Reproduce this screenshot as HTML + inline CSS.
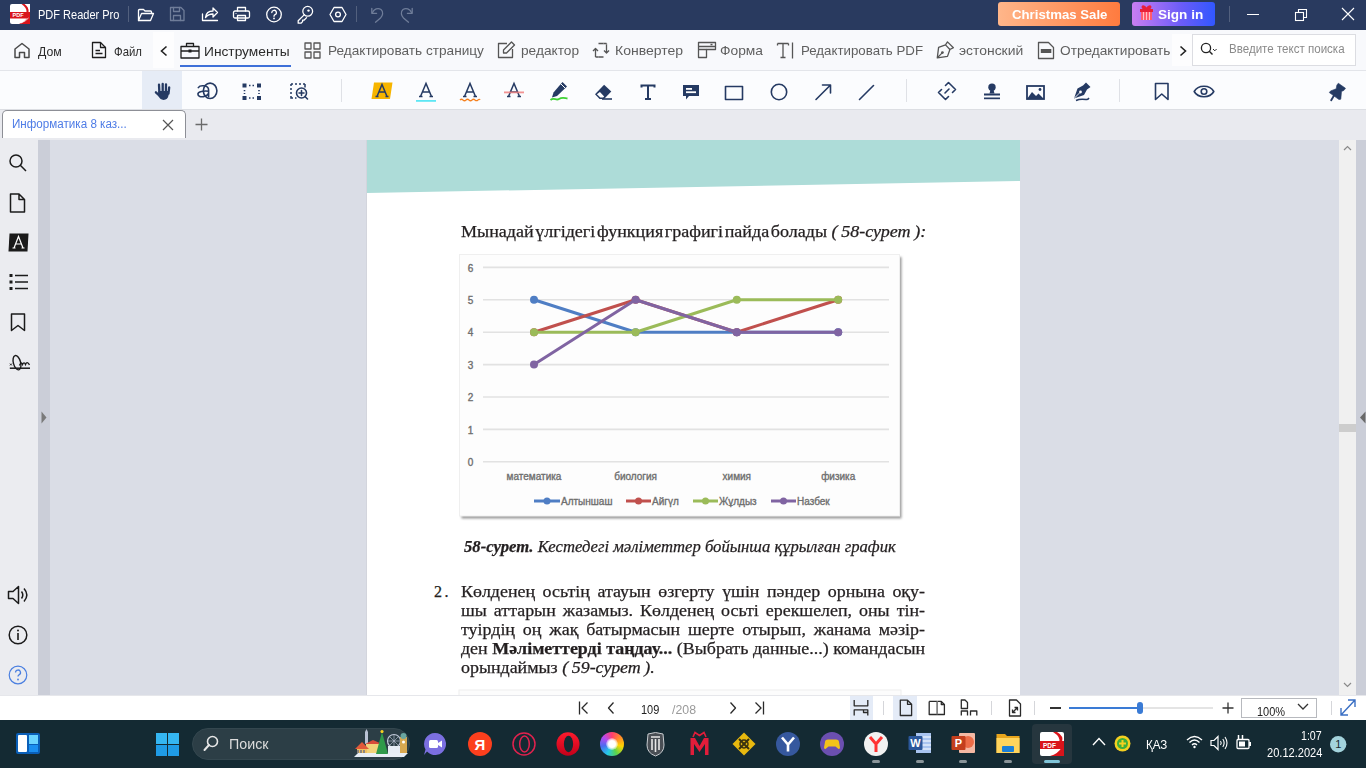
<!DOCTYPE html>
<html><head><meta charset="utf-8">
<style>
*{margin:0;padding:0;box-sizing:border-box}
html,body{width:1366px;height:768px;overflow:hidden;background:#dadde6;font-family:"Liberation Sans",sans-serif;position:relative}
.a{position:absolute}
svg.a{overflow:visible}
.t{position:absolute;white-space:nowrap;line-height:normal;transform-origin:0 0}
.txt{font-family:"Liberation Serif",serif;font-size:16px;line-height:19px;color:#231f20;white-space:nowrap;-webkit-text-stroke:0.25px #231f20}
.par{width:414.3px;transform:scaleX(1.12);transform-origin:0 0}
.ln{text-align:justify;text-align-last:justify;white-space:normal}
#page{left:367px;top:140px;width:653px;height:555px;background:#fff;overflow:hidden}
</style></head><body>
<div class="a" style="left:0;top:0;width:1366px;height:30px;background:#293a5f"></div>
<svg class="a" style="left:10px;top:4px;" width="20" height="20" viewBox="0 0 20 20"><rect x="0" y="0" width="20" height="20" rx="2" fill="#fff"/>
<path d="M11,0 A12,12 0 0 1 20,9 V0 Z" fill="#fff"/>
<path d="M11.5,0 Q17,4 16.5,8 L18.5,8 Q19,3 14.5,0 Z" fill="#d9141b"/>
<rect x="0" y="8" width="20" height="6.5" fill="#d9141b"/>
<path d="M9,20 Q15,18 18,13 L20,13 V20 Z" fill="#d9141b"/>
<path d="M11,19 Q16,17 18.5,14" stroke="#fff" stroke-width="0.8" fill="none"/>
<text x="2.5" y="13.3" font-family="Liberation Sans" font-weight="bold" font-size="5.5" fill="#fff">PDF</text></svg>
<span class="t" id="t0" style="transform:scaleX(0.9177);left:38px;top:7.84px;font-size:12px;color:#ffffff;font-weight:normal;font-family:'Liberation Sans';font-style:normal;">PDF Reader Pro</span>
<div class="a" style="left:128px;top:6px;width:1px;height:16px;background:#52607e"></div>
<div class="a" style="left:356px;top:6px;width:1px;height:16px;background:#52607e"></div>
<div class="a" style="left:1229px;top:6px;width:1px;height:16px;background:#52607e"></div>
<svg class="a" style="left:137px;top:8px;" width="18" height="14" viewBox="0 0 18 14"><path d="M1.5,12.5 V2.5 a1,1 0 0 1 1,-1 h4 l1.5,1.5 h5.5 a1,1 0 0 1 1,1 v1.5" fill="none" stroke="#ffffff" stroke-width="1.3" stroke-linejoin="round" stroke-linecap="round"/><path d="M1.5,12.5 L4.5,5.5 H16.5 L13.5,12.5 Z" fill="none" stroke="#ffffff" stroke-width="1.3" stroke-linejoin="round" stroke-linecap="round"/></svg>
<svg class="a" style="left:169px;top:6px;" width="17" height="16" viewBox="0 0 17 16"><path d="M1.5,1.5 H12 L15,4.5 V14.5 H1.5 Z" fill="none" stroke="#6f7d99" stroke-width="1.3" stroke-linejoin="round" stroke-linecap="round"/><path d="M4.5,1.5 V5.5 H10.5 V1.5" fill="none" stroke="#6f7d99" stroke-width="1.3" stroke-linejoin="round" stroke-linecap="round"/><path d="M4.5,14.5 V9.5 H11.5 V14.5" fill="none" stroke="#6f7d99" stroke-width="1.3" stroke-linejoin="round" stroke-linecap="round"/></svg>
<svg class="a" style="left:201px;top:6px;" width="18" height="16" viewBox="0 0 18 16"><path d="M1.5,8 V14.5 H16.5" fill="none" stroke="#ffffff" stroke-width="1.3" stroke-linejoin="round" stroke-linecap="round"/><path d="M4.5,11.5 C5,7 8.5,5 12,5 V2 L16.5,6.5 L12,11 V8 C9,8 6.5,9 4.5,11.5 Z" fill="none" stroke="#ffffff" stroke-width="1.3" stroke-linejoin="round" stroke-linecap="round"/></svg>
<svg class="a" style="left:232px;top:6px;" width="19" height="16" viewBox="0 0 19 16"><path d="M5.5,5 V1.5 H13.5 V5" fill="none" stroke="#ffffff" stroke-width="1.3" stroke-linejoin="round" stroke-linecap="round"/><rect x="1.5" y="5" width="16" height="7" rx="1.5" fill="none" stroke="#ffffff" stroke-width="1.3" stroke-linejoin="round" stroke-linecap="round"/><rect x="5.5" y="9.5" width="8" height="5" fill="none" stroke="#ffffff" stroke-width="1.3" stroke-linejoin="round" stroke-linecap="round" fill="#293a5f"/><circle cx="4" cy="7.5" r="0.6" fill="#fff"/></svg>
<svg class="a" style="left:265px;top:6px;" width="18" height="17" viewBox="0 0 18 17"><circle cx="9" cy="8.5" r="7.3" fill="none" stroke="#ffffff" stroke-width="1.3" stroke-linejoin="round" stroke-linecap="round"/><path d="M6.8,6.6 a2.3,2.3 0 1 1 3.2,2.1 c-0.8,0.4 -1,0.8 -1,1.6" fill="none" stroke="#ffffff" stroke-width="1.3" stroke-linejoin="round" stroke-linecap="round" stroke-width="1.5"/><circle cx="9" cy="12.4" r="0.9" fill="#fff"/></svg>
<svg class="a" style="left:296px;top:5px;" width="19" height="19" viewBox="0 0 19 19"><path d="M8.4,9.6 L2.2,15.8 V18.2 H5 L6.6,16.6 V15.2 H8 L10.6,12.6" fill="none" stroke="#ffffff" stroke-width="1.3" stroke-linejoin="round" stroke-linecap="round" stroke-width="1.2"/><circle cx="11.7" cy="6.3" r="4.9" fill="none" stroke="#ffffff" stroke-width="1.3" stroke-linejoin="round" stroke-linecap="round" stroke-width="1.2" fill="#293a5f"/><circle cx="12.5" cy="5.6" r="1.2" fill="#fff"/></svg>
<svg class="a" style="left:329px;top:6px;" width="18" height="17" viewBox="0 0 18 17"><path d="M5,1.5 H13 L17,8.5 L13,15.5 H5 L1,8.5 Z" fill="none" stroke="#ffffff" stroke-width="1.3" stroke-linejoin="round" stroke-linecap="round"/><circle cx="9" cy="8.5" r="2.4" fill="none" stroke="#ffffff" stroke-width="1.3" stroke-linejoin="round" stroke-linecap="round"/></svg>
<svg class="a" style="left:369px;top:6px;" width="16" height="18" viewBox="0 0 16 18"><path d="M3.5,6.5 C5,3 9,1.5 12,3.5 C15,6 13.5,10 11.5,12 L6.5,16.2" fill="none" stroke="#6f7d99" stroke-width="1.3" stroke-linejoin="round" stroke-linecap="round" stroke-width="1.2"/><path d="M2.8,2.3 V7.3 H7.6" fill="none" stroke="#6f7d99" stroke-width="1.3" stroke-linejoin="round" stroke-linecap="round" stroke-width="1.2"/></svg>
<svg class="a" style="left:399px;top:6px;" width="16" height="18" viewBox="0 0 16 18"><g transform="translate(16,0) scale(-1,1)"><path d="M3.5,6.5 C5,3 9,1.5 12,3.5 C15,6 13.5,10 11.5,12 L6.5,16.2" fill="none" stroke="#6f7d99" stroke-width="1.3" stroke-linejoin="round" stroke-linecap="round" stroke-width="1.2"/><path d="M2.8,2.3 V7.3 H7.6" fill="none" stroke="#6f7d99" stroke-width="1.3" stroke-linejoin="round" stroke-linecap="round" stroke-width="1.2"/></g></svg>
<div class="a" style="left:998px;top:2px;width:122px;height:24px;border-radius:3px;background:linear-gradient(90deg,#ffb68a,#ff7b3f)"></div>
<span class="t" id="t1" style="transform:scaleX(0.9780);left:1012px;top:6.58px;font-size:13.5px;color:#ffffff;font-weight:bold;font-family:'Liberation Sans';font-style:normal;">Christmas Sale</span>
<div class="a" style="left:1132px;top:2px;width:83px;height:24px;border-radius:3px;background:linear-gradient(90deg,#c97ef2,#6a5cf8 60%,#3157ff)"></div>
<svg class="a" style="left:1140px;top:4px;" width="13" height="17" viewBox="0 0 13 17"><rect x="1" y="7" width="11" height="9" fill="#ff5a6e"/><rect x="3" y="7" width="1" height="9" fill="#ffc0c8"/><rect x="6" y="7" width="1" height="9" fill="#ffc0c8"/><rect x="9" y="7" width="1" height="9" fill="#ffc0c8"/><rect x="0" y="5" width="13" height="3" fill="#e8203a"/><path d="M6.5,5 C3,0 1,3 4,5 M6.5,5 C10,0 12,3 9,5" stroke="#e8203a" stroke-width="2" fill="#e8203a"/></svg>
<span class="t" id="t2" style="transform:scaleX(1.0044);left:1157.5px;top:6.58px;font-size:13.5px;color:#ffffff;font-weight:bold;font-family:'Liberation Sans';font-style:normal;">Sign in</span>
<div class="a" style="left:1247px;top:14px;width:12px;height:1px;background:#fff"></div>
<svg class="a" style="left:1294px;top:8px;" width="14" height="14" viewBox="0 0 14 14"><rect x="1.5" y="4.5" width="8" height="8" fill="none" stroke="#fff" stroke-width="1.1"/><path d="M4.5,4.5 V1.5 H12.5 V9.5 H9.5" fill="none" stroke="#fff" stroke-width="1.1"/></svg>
<svg class="a" style="left:1341px;top:7px;" width="14" height="14" viewBox="0 0 14 14"><path d="M1,1 L13,13 M13,1 L1,13" stroke="#fff" stroke-width="1.1"/></svg>
<div class="a" style="left:0;top:30px;width:1366px;height:40px;background:#f8f9fc"></div>
<div class="a" style="left:0;top:70px;width:1366px;height:1px;background:#e3e5ea"></div>
<div class="a" style="left:153px;top:32px;width:21px;height:36px;background:#fdfdfe"></div>
<div class="a" style="left:1172px;top:34px;width:20px;height:32px;background:#fdfdfe"></div>
<svg class="a" style="left:13px;top:42px;" width="18" height="17" viewBox="0 0 18 17"><path d="M2,15.5 V7 L9,1.5 L16,7 V15.5 H11.5 V10.5 H6.5 V15.5 Z" fill="none" stroke="#4a4a4a" stroke-width="1.5" stroke-linejoin="round"/></svg>
<span class="t" id="t3" style="transform:scaleX(0.9433);left:37.8px;top:43.53px;font-size:13px;color:#2b2b2b;font-weight:normal;font-family:'Liberation Sans';font-style:normal;">Дом</span>
<svg class="a" style="left:91px;top:41px;" width="16" height="18" viewBox="0 0 16 18"><path d="M1.5,1.5 H9.5 L14.5,6.5 V16.5 H1.5 Z" fill="none" stroke="#1e1e1e" stroke-width="1.3" stroke-linejoin="round"/><path d="M9.5,1.5 V6.5 H14.5" fill="none" stroke="#1e1e1e" stroke-width="1.3" stroke-linejoin="round"/><path d="M4.5,9.5 H9 M4.5,12.5 H11.5" fill="none" stroke="#1e1e1e" stroke-width="1.3" stroke-linejoin="round"/></svg>
<span class="t" id="t4" style="transform:scaleX(0.8727);left:113.8px;top:43.53px;font-size:13px;color:#2b2b2b;font-weight:normal;font-family:'Liberation Sans';font-style:normal;">Файл</span>
<svg class="a" style="left:159px;top:45px;" width="10" height="12" viewBox="0 0 10 12"><path d="M7.5,1.5 L2.5,6 L7.5,10.5" fill="none" stroke="#222" stroke-width="1.6"/></svg>
<svg class="a" style="left:180px;top:42px;" width="20" height="17" viewBox="0 0 20 17"><rect x="1" y="4.5" width="18" height="11.5" fill="none" stroke="#1e1e1e" stroke-width="1.3" stroke-linejoin="round"/><path d="M6.5,4.5 V1.5 H13.5 V4.5 M1,9 H19" fill="none" stroke="#1e1e1e" stroke-width="1.3" stroke-linejoin="round"/><rect x="8.5" y="7.5" width="3" height="3" fill="#1e1e1e"/></svg>
<span class="t" id="t5" style="transform:scaleX(1.0572);left:204.3px;top:43.53px;font-size:13px;color:#2b2b2b;font-weight:normal;font-family:'Liberation Sans';font-style:normal;">Инструменты</span>
<div class="a" style="left:180px;top:65px;width:111px;height:2px;background:#3d6fd8"></div>
<svg class="a" style="left:304px;top:42px;" width="18" height="17" viewBox="0 0 18 17"><rect x="1" y="1" width="6" height="6" fill="none" stroke="#555" stroke-width="1.3" stroke-linejoin="round"/><rect x="10" y="1" width="6" height="6" fill="none" stroke="#555" stroke-width="1.3" stroke-linejoin="round"/><rect x="1" y="10" width="6" height="6" fill="none" stroke="#555" stroke-width="1.3" stroke-linejoin="round"/><rect x="10" y="10" width="6" height="6" fill="none" stroke="#555" stroke-width="1.3" stroke-linejoin="round"/></svg>
<span class="t" id="t6" style="transform:scaleX(1.0483);left:328px;top:42.84px;font-size:13px;color:#5f5f5f;font-weight:normal;font-family:'Liberation Sans';font-style:normal;">Редактировать страницу</span>
<svg class="a" style="left:497px;top:41px;" width="19" height="18" viewBox="0 0 19 18"><path d="M10,2.5 H1.5 V16.5 H15.5 V8" fill="none" stroke="#555" stroke-width="1.3" stroke-linejoin="round"/><path d="M14.5,1 L17.5,4 L9.5,12 H6.5 V9 Z" fill="none" stroke="#555" stroke-width="1.3" stroke-linejoin="round"/></svg>
<span class="t" id="t7" style="transform:scaleX(1.0528);left:520.8px;top:42.84px;font-size:13px;color:#5f5f5f;font-weight:normal;font-family:'Liberation Sans';font-style:normal;">редактор</span>
<svg class="a" style="left:592px;top:42px;" width="18" height="17" viewBox="0 0 18 17"><path d="M3.5,14 V6.5 M1,9 L3.5,6.5 L6,9 M6.5,15 H11.5" fill="none" stroke="#555" stroke-width="1.3" stroke-linejoin="round"/><path d="M14.5,2.5 V11 M12,8.5 L14.5,11 L17,8.5 M11.5,1.5 H6.5" fill="none" stroke="#555" stroke-width="1.3" stroke-linejoin="round"/><path d="M3.5,15 H6.5 M3.5,14 V15 M14.5,1.5 H11.5 M14.5,2.5 V1.5" fill="none" stroke="#555" stroke-width="1.3" stroke-linejoin="round"/></svg>
<span class="t" id="t8" style="transform:scaleX(1.0777);left:615.3px;top:42.84px;font-size:13px;color:#5f5f5f;font-weight:normal;font-family:'Liberation Sans';font-style:normal;">Конвертер</span>
<svg class="a" style="left:697px;top:41px;" width="20" height="18" viewBox="0 0 20 18"><path d="M1.5,16.5 V1.5 H18.5 V8.5 H9.5 V16.5 Z" fill="none" stroke="#555" stroke-width="1.3" stroke-linejoin="round"/><path d="M1.5,8.5 H9.5 M1.5,5.5 H18.5" fill="none" stroke="#555" stroke-width="1.3" stroke-linejoin="round"/><rect x="13.5" y="2.8" width="2" height="1.5" fill="#555"/></svg>
<span class="t" id="t9" style="transform:scaleX(1.0613);left:720px;top:42.84px;font-size:13px;color:#5f5f5f;font-weight:normal;font-family:'Liberation Sans';font-style:normal;">Форма</span>
<svg class="a" style="left:776px;top:42px;" width="18" height="17" viewBox="0 0 18 17"><path d="M1.5,1.5 H12.5 M1.5,1.5 V3.5 M12.5,1.5 V3.5 M7,1.5 V15.5 M4.5,15.5 H9.5 M16.5,0.5 V16.5" fill="none" stroke="#555" stroke-width="1.3" stroke-linejoin="round"/></svg>
<span class="t" id="t10" style="transform:scaleX(1.0216);left:800.7px;top:42.84px;font-size:13px;color:#5f5f5f;font-weight:normal;font-family:'Liberation Sans';font-style:normal;">Редактировать PDF</span>
<svg class="a" style="left:935px;top:41px;" width="20" height="19" viewBox="0 0 20 19"><path d="M2.3,16.9 L3.6,6.3 L10.5,3.9 L14.9,8.5 L12.5,15.4 Z M10.5,3.9 L12.5,0.9 L18.4,6.7 L14.9,8.5 M2.3,16.9 L7.4,11.6" fill="none" stroke="#555" stroke-width="1.3" stroke-linejoin="round" stroke-width="1.2"/><circle cx="7.4" cy="11.6" r="1.4" fill="#555"/></svg>
<span class="t" id="t11" style="transform:scaleX(1.0689);left:959px;top:42.84px;font-size:13px;color:#5f5f5f;font-weight:normal;font-family:'Liberation Sans';font-style:normal;">эстонский</span>
<svg class="a" style="left:1037px;top:41px;" width="18" height="19" viewBox="0 0 18 19"><path d="M1.5,1.5 H11.5 L16.5,6.5 V17.5 H1.5 Z" fill="none" stroke="#555" stroke-width="1.3" stroke-linejoin="round"/><rect x="3.8" y="8" width="10.5" height="4" fill="#555"/></svg>
<span class="t" id="t12" style="transform:scaleX(1.0514);left:1060px;top:42.84px;font-size:13px;color:#5f5f5f;font-weight:normal;font-family:'Liberation Sans';font-style:normal;">Отредактировать</span>
<svg class="a" style="left:1178px;top:45px;" width="10" height="12" viewBox="0 0 10 12"><path d="M2.5,1.5 L7.5,6 L2.5,10.5" fill="none" stroke="#222" stroke-width="1.6"/></svg>
<div class="a" style="left:1192px;top:34px;width:164px;height:32px;background:#fff;border:1px solid #dcdde2"></div>
<svg class="a" style="left:1200px;top:42px;" width="18" height="14" viewBox="0 0 18 14"><circle cx="6" cy="6" r="4.6" fill="none" stroke="#222" stroke-width="1.3"/><path d="M9.3,9.3 L12.5,12.5" stroke="#222" stroke-width="1.4"/><path d="M13,7 L14.8,8.8 L16.6,7" fill="none" stroke="#222" stroke-width="1"/></svg>
<span class="t" id="t13" style="transform:scaleX(0.9630);left:1228.7px;top:42.14px;font-size:12px;color:#8a8a8a;font-weight:normal;font-family:'Liberation Sans';font-style:normal;">Введите текст поиска</span>
<div class="a" style="left:0;top:71px;width:1366px;height:38px;background:#fbfcfe"></div>
<div class="a" style="left:0;top:109px;width:1366px;height:1px;background:#dcdee3"></div>
<div class="a" style="left:142px;top:71px;width:40px;height:38px;background:#e6ecf6"></div>
<div class="a" style="left:341px;top:79px;width:1px;height:23px;background:#dfe1e6"></div>
<div class="a" style="left:906px;top:79px;width:1px;height:23px;background:#dfe1e6"></div>
<div class="a" style="left:1119px;top:79px;width:1px;height:23px;background:#dfe1e6"></div>
<svg class="a" style="left:154px;top:82px;" width="18" height="19" viewBox="0 0 18 19"><path d="M4.3,9 H15 L14.6,13 C14.2,16.3 12.2,17.9 9.6,17.9 C7.2,17.9 5.6,16.6 4.6,14.6 Z" fill="#253a63"/><path d="M5,2.6 L5.4,11 M8.7,1.9 V11 M12,2.3 L11.9,11 M15.2,5.3 L14.5,11.5 M1.9,10.3 L5.2,13.5" stroke="#253a63" stroke-width="2.3" stroke-linecap="round"/></svg>
<svg class="a" style="left:196px;top:82px;" width="22" height="18" viewBox="0 0 22 18"><ellipse cx="14.1" cy="8.8" rx="6.8" ry="7.7" fill="none" stroke="#253a63" stroke-width="1.6" stroke-linejoin="round" stroke-linecap="round" stroke-width="1.7"/><path d="M2.3,5.6 C3.3,4 5,3.6 7.5,3.8 C10.8,4.1 12.6,5.2 12.6,8 V14.8 M12.6,9.2 C8,8.8 1.9,9.2 1.9,12.1 C1.9,14.6 5,15.1 7.5,14.6 C10,14.1 12,12.6 12.6,11.2" fill="none" stroke="#253a63" stroke-width="1.6" stroke-linejoin="round" stroke-linecap="round" stroke-width="1.9"/></svg>
<svg class="a" style="left:242px;top:83px;" width="20" height="18" viewBox="0 0 20 18"><rect x="0.5" y="0.5" width="4" height="4" fill="#253a63"/><rect x="15" y="0.5" width="4" height="4" fill="#253a63"/><rect x="0.5" y="13" width="4" height="4" fill="#253a63"/><rect x="15" y="13" width="4" height="4" fill="#253a63"/><path d="M7,2.5 H8.5 M10.5,2.5 H12 M7,15 H8.5 M10.5,15 H12 M2.5,7 V8.3 M2.5,10 V11 M17,7 V8.3 M17,10 V11" stroke="#253a63" stroke-width="1.6"/></svg>
<svg class="a" style="left:290px;top:83px;" width="19" height="17" viewBox="0 0 19 17"><path d="M1,1 H3 M5,1 H7 M9,1 H11 M13,1 H15 M1,1 V3 M1,5 V7 M1,9 V11 M1,13 V15 H3 M5,15 H6.5 M15,1 V4.5" stroke="#253a63" stroke-width="1.5" fill="none"/><circle cx="11.5" cy="10" r="5" fill="none" stroke="#253a63" stroke-width="1.6" stroke-linejoin="round" stroke-linecap="round" stroke-width="1.5"/><path d="M9,10 H14 M11.5,7.5 V12.5 M15,13.5 L17.5,16" fill="none" stroke="#253a63" stroke-width="1.6" stroke-linejoin="round" stroke-linecap="round" stroke-width="1.5"/></svg>
<svg class="a" style="left:371px;top:82px;" width="22" height="18" viewBox="0 0 22 18"><path d="M3,0.5 H21.5 L19,17 H0.5 Z" fill="#f7b500"/><path d="M6,14.5 L11,2.5 L16,14.5 M7.8,10 H14.2 M4.5,14.5 H7.5 M14.5,14.5 H17.5" stroke="#253a63" stroke-width="1.5" fill="none"/></svg>
<svg class="a" style="left:415px;top:82px;" width="22" height="20" viewBox="0 0 22 20"><path d="M5.5,14.5 L11,1.5 L16.5,14.5 M7.5,10 H14.5 M4,14.5 H7.5 M14.5,14.5 H18" stroke="#253a63" stroke-width="1.5" fill="none"/><rect x="1" y="18" width="20" height="1.8" fill="#5ee6f4"/></svg>
<svg class="a" style="left:459px;top:82px;" width="22" height="20" viewBox="0 0 22 20"><path d="M5.5,14.5 L11,1.5 L16.5,14.5 M7.5,10 H14.5 M4,14.5 H7.5 M14.5,14.5 H18" stroke="#253a63" stroke-width="1.5" fill="none"/><path d="M1,18 Q2.5,16.5 4,18 T7,18 T10,18 T13,18 T16,18 T19,18 T21,18" stroke="#f5811f" stroke-width="1.2" fill="none"/></svg>
<svg class="a" style="left:503px;top:82px;" width="22" height="18" viewBox="0 0 22 18"><path d="M5.5,14.5 L11,1.5 L16.5,14.5 M7.5,10 H14.5 M4,14.5 H7.5 M14.5,14.5 H18" stroke="#253a63" stroke-width="1.5" fill="none"/><rect x="1" y="9.5" width="20" height="1.8" fill="#f08080" opacity="0.85"/></svg>
<svg class="a" style="left:549px;top:81px;" width="20" height="21" viewBox="0 0 20 21"><path d="M13.5,1 L18,5.5 L8,15 L3,16.5 L4.5,11.5 Z" fill="#253a63"/><path d="M12,3 L16,7" stroke="#fff" stroke-width="1"/><path d="M1.5,19 C5,16 7,20 10,18 S15,17 18.5,17.5" stroke="#3ed134" stroke-width="1.8" fill="none"/></svg>
<svg class="a" style="left:594px;top:84px;" width="19" height="17" viewBox="0 0 19 17"><path d="M10.1,0.7 L17.3,7.6 L10,14.9 H5.6 L1,10.3 Z" fill="#253a63"/><path d="M2.9,10.3 L6.3,13.6 H9.1 L10.2,12.5 L5.9,8.1 Z" fill="#fff"/><path d="M8,15 H18" stroke="#253a63" stroke-width="1.6"/></svg>
<svg class="a" style="left:640px;top:84px;" width="16" height="17" viewBox="0 0 16 17"><path d="M1.5,3.5 V1.5 H14.5 V3.5 M8,1.5 V15 M5,15 H11" stroke="#253a63" stroke-width="2" fill="none"/></svg>
<svg class="a" style="left:682px;top:84px;" width="18" height="17" viewBox="0 0 18 17"><path d="M1,1 H17 V12 H7 L4,15.5 V12 H1 Z" fill="#253a63"/><rect x="4" y="4" width="6" height="1.8" fill="#fff"/><rect x="4" y="7.3" width="10" height="1.8" fill="#fff"/></svg>
<svg class="a" style="left:724px;top:85px;" width="20" height="16" viewBox="0 0 20 16"><rect x="1.5" y="1.5" width="17" height="13" fill="none" stroke="#253a63" stroke-width="1.6" stroke-linejoin="round" stroke-linecap="round" stroke-width="1.9"/></svg>
<svg class="a" style="left:770px;top:83px;" width="18" height="18" viewBox="0 0 18 18"><circle cx="9" cy="9" r="7.7" fill="none" stroke="#253a63" stroke-width="1.6" stroke-linejoin="round" stroke-linecap="round" stroke-width="1.7"/></svg>
<svg class="a" style="left:814px;top:83px;" width="19" height="18" viewBox="0 0 19 18"><path d="M2,16.5 L16.5,2 M8.5,2 H16.5 V10" fill="none" stroke="#253a63" stroke-width="1.6" stroke-linejoin="round" stroke-linecap="round" stroke-width="1.8" stroke-linecap="butt"/></svg>
<svg class="a" style="left:858px;top:84px;" width="17" height="17" viewBox="0 0 17 17"><path d="M1.5,15.5 L15.5,1.5" fill="none" stroke="#253a63" stroke-width="1.6" stroke-linejoin="round" stroke-linecap="round" stroke-width="1.8"/></svg>
<svg class="a" style="left:937px;top:81px;" width="20" height="20" viewBox="0 0 20 20"><path d="M8.5,4.5 L11.5,1.5 L18.5,8.5 L15.5,11.5 M11.5,15.5 L8.5,18.5 L1.5,11.5 L4.5,8.5 M8,12 L12,8" fill="none" stroke="#253a63" stroke-width="1.6" stroke-linejoin="round" stroke-linecap="round" stroke-width="1.7"/></svg>
<svg class="a" style="left:983px;top:83px;" width="18" height="17" viewBox="0 0 18 17"><circle cx="9" cy="4.3" r="3.7" fill="#253a63"/><path d="M7.5,7 L6.5,10.5 H11.5 L10.5,7 Z" fill="#253a63"/><rect x="1" y="10.5" width="16" height="2" fill="#253a63"/><rect x="1" y="14.5" width="16" height="1.7" fill="#253a63"/></svg>
<svg class="a" style="left:1026px;top:85px;" width="19" height="15" viewBox="0 0 19 15"><rect x="1" y="1" width="17" height="13" fill="none" stroke="#253a63" stroke-width="1.8"/><path d="M1,14 L6,7 L10,11 L12.5,8.5 L18,14 Z" fill="#253a63"/><circle cx="14" cy="4.5" r="1.4" fill="#253a63"/></svg>
<svg class="a" style="left:1071px;top:81px;" width="21" height="21" viewBox="0 0 21 21"><path d="M15,1.5 L19.5,6 L16,8.5 L13,14 L3,17.5 L6.5,7.5 L12,4.5 Z" fill="#253a63"/><circle cx="9.5" cy="11" r="1.4" fill="#fff"/><path d="M3.5,17 L9,11.5" stroke="#fff" stroke-width="0.9"/><path d="M5,19.5 C8,18 12,18 15,18.5 C16,18.7 17,18.5 18,17" stroke="#253a63" stroke-width="1.5" fill="none"/></svg>
<svg class="a" style="left:1154px;top:82px;" width="16" height="19" viewBox="0 0 16 19"><path d="M1.5,1.5 H14 V17.5 L7.75,12 L1.5,17.5 Z" fill="none" stroke="#253a63" stroke-width="1.6" stroke-linejoin="round" stroke-linecap="round" stroke-width="1.8"/></svg>
<svg class="a" style="left:1193px;top:84px;" width="22" height="15" viewBox="0 0 22 15"><path d="M1.2,7.5 C5,0.5 17,0.5 20.8,7.5 C17,14.5 5,14.5 1.2,7.5 Z" fill="none" stroke="#253a63" stroke-width="1.6" stroke-linejoin="round" stroke-linecap="round" stroke-width="2"/><circle cx="11" cy="7.5" r="2.8" fill="none" stroke="#253a63" stroke-width="1.6" stroke-linejoin="round" stroke-linecap="round" stroke-width="2"/></svg>
<svg class="a" style="left:1328px;top:82px;" width="19" height="20" viewBox="0 0 19 20"><path d="M10.3,1.2 L17.5,6.3 L16,8.3 L13.5,9.5 L12.8,17.2 L11,17.6 L1.3,10.6 L2.6,8.9 L8.2,6.8 L8.8,3.2 Z" fill="#253a63" stroke="#253a63" stroke-width="0.6" stroke-linejoin="round"/><path d="M6,13.6 L3.2,18.2" stroke="#253a63" stroke-width="1.9" stroke-linecap="round"/></svg>
<div class="a" style="left:0;top:110px;width:1366px;height:30px;background:#e9eaef"></div>
<div class="a" style="left:2px;top:110px;width:184px;height:28px;background:#fff;border:1px solid #8d8f96;border-bottom:none;border-radius:5px 5px 0 0"></div>
<span class="t" id="t14" style="transform:scaleX(0.9694);left:11.6px;top:116.84px;font-size:12px;color:#4e7ce6;font-weight:normal;font-family:'Liberation Sans';font-style:normal;">Информатика 8 каз...</span>
<svg class="a" style="left:162px;top:119px;" width="12" height="12" viewBox="0 0 12 12"><path d="M1,1 L11,11 M11,1 L1,11" stroke="#555" stroke-width="1.2"/></svg>
<svg class="a" style="left:195px;top:118px;" width="13" height="13" viewBox="0 0 13 13"><path d="M6.5,0.5 V12.5 M0.5,6.5 H12.5" stroke="#6a6a6a" stroke-width="1.3"/></svg>
<div class="a" style="left:0;top:138px;width:38px;height:557px;background:#ebecf0"></div>
<div class="a" style="left:38px;top:140px;width:12px;height:555px;background:#cbced8"></div>
<div class="a" style="left:50px;top:140px;width:1289px;height:555px;background:#dadde6"></div>
<div class="a" style="left:366px;top:140px;width:1px;height:555px;background:#d3d5dd"></div>
<div id="page" class="a">
<svg class="a" style="left:0;top:0" width="653" height="555" viewBox="367 140 653 555">
<polygon points="367,140 1020,140 1020,181 367,193" fill="#addcd8"/>
<defs><filter id="sh" x="-5%" y="-5%" width="110%" height="115%"><feGaussianBlur stdDeviation="1.2"/></filter></defs>
<rect x="461.5" y="257" width="440" height="261.5" fill="#9a9a9a" filter="url(#sh)"/>
<rect x="459.5" y="254.5" width="440" height="261.5" fill="#fdfdfd" stroke="#efefef" stroke-width="1"/>
<g stroke="#e2e2e2" stroke-width="1.6">
<line x1="483" y1="267.4" x2="889" y2="267.4"/><line x1="483" y1="299.8" x2="889" y2="299.8"/>
<line x1="483" y1="332.2" x2="889" y2="332.2"/><line x1="483" y1="364.6" x2="889" y2="364.6"/>
<line x1="483" y1="397" x2="889" y2="397"/><line x1="483" y1="429.4" x2="889" y2="429.4"/>
<line x1="483" y1="461.8" x2="889" y2="461.8"/>
</g>
<g font-family="Liberation Sans" font-size="10" fill="#6f6f6f" stroke="#6f6f6f" stroke-width="0.35" text-anchor="middle">
<text x="470.5" y="271.6">6</text><text x="470.5" y="304.0">5</text><text x="470.5" y="336.4">4</text>
<text x="470.5" y="368.8">3</text><text x="470.5" y="401.2">2</text><text x="470.5" y="433.6">1</text>
<text x="470.5" y="466.0">0</text>
<text x="534" y="480.3">математика</text><text x="635.6" y="480.3">биология</text>
<text x="736.8" y="480.3">химия</text><text x="838.2" y="480.3">физика</text>
</g>
<polyline points="534.0,299.8 635.6,332.2 736.8,332.2 838.2,332.2" fill="none" stroke="#4f7ec4" stroke-width="3" stroke-linejoin="round"/>
<circle cx="534.0" cy="299.8" r="4" fill="#4f7ec4"/>
<circle cx="635.6" cy="332.2" r="4" fill="#4f7ec4"/>
<circle cx="736.8" cy="332.2" r="4" fill="#4f7ec4"/>
<circle cx="838.2" cy="332.2" r="4" fill="#4f7ec4"/>
<polyline points="534.0,332.2 635.6,299.8 736.8,332.2 838.2,299.8" fill="none" stroke="#c0504d" stroke-width="3" stroke-linejoin="round"/>
<circle cx="534.0" cy="332.2" r="4" fill="#c0504d"/>
<circle cx="635.6" cy="299.8" r="4" fill="#c0504d"/>
<circle cx="736.8" cy="332.2" r="4" fill="#c0504d"/>
<circle cx="838.2" cy="299.8" r="4" fill="#c0504d"/>
<polyline points="534.0,332.2 635.6,332.2 736.8,299.8 838.2,299.8" fill="none" stroke="#9bbb59" stroke-width="3" stroke-linejoin="round"/>
<circle cx="534.0" cy="332.2" r="4" fill="#9bbb59"/>
<circle cx="635.6" cy="332.2" r="4" fill="#9bbb59"/>
<circle cx="736.8" cy="299.8" r="4" fill="#9bbb59"/>
<circle cx="838.2" cy="299.8" r="4" fill="#9bbb59"/>
<polyline points="534.0,364.6 635.6,299.8 736.8,332.2 838.2,332.2" fill="none" stroke="#8064a2" stroke-width="3" stroke-linejoin="round"/>
<circle cx="534.0" cy="364.6" r="4" fill="#8064a2"/>
<circle cx="635.6" cy="299.8" r="4" fill="#8064a2"/>
<circle cx="736.8" cy="332.2" r="4" fill="#8064a2"/>
<circle cx="838.2" cy="332.2" r="4" fill="#8064a2"/>
<g stroke-width="3">
<line x1="534" y1="501" x2="560" y2="501" stroke="#4f7ec4"/><circle cx="547" cy="501" r="3.5" fill="#4f7ec4"/>
<line x1="626" y1="501" x2="651" y2="501" stroke="#c0504d"/><circle cx="638.5" cy="501" r="3.5" fill="#c0504d"/>
<line x1="693" y1="501" x2="718" y2="501" stroke="#9bbb59"/><circle cx="705.5" cy="501" r="3.5" fill="#9bbb59"/>
<line x1="771" y1="501" x2="796" y2="501" stroke="#8064a2"/><circle cx="783.5" cy="501" r="3.5" fill="#8064a2"/>
</g>
<g font-family="Liberation Sans" font-size="10" fill="#6f6f6f" stroke="#6f6f6f" stroke-width="0.35">
<text x="561" y="504.5">Алтыншаш</text><text x="652" y="504.5">Айгүл</text>
<text x="719" y="504.5">Жұлдыз</text><text x="797" y="504.5">Назбек</text>
</g>
<rect x="459" y="690" width="442" height="10" fill="#fcfcfc" stroke="#eeeeee"/>
</svg>
<div class="a txt" id="h1" style="left:94px;top:82px;transform:scaleX(1.1265);transform-origin:0 0"><span style="word-spacing:-2.5px">Мынадай үлгідегі функция графигі пайда болады</span> <i>(&#8201;58-сурет&#8201;):</i></div>
<div class="a txt" id="cap" style="left:97px;top:397px;transform:scaleX(1.0414);transform-origin:0 0"><b><i>58-сурет.</i></b> <i>Кестедегі мәліметтер бойынша құрылған график</i></div>
<div class="a txt" style="left:67px;top:442px;letter-spacing:2.5px">2.</div>
<div class="a txt par" style="left:94px;top:442px">
<div class="ln">Көлденең осьтің атауын өзгерту үшін пәндер орнына оқу-</div>
<div class="ln">шы аттарын жазамыз. Көлденең осьті ерекшелеп, оны тін-</div>
<div class="ln">туірдің оң жақ батырмасын шерте отырып, жанама мәзір-</div>
<div class="ln">ден <b>Мәліметтерді таңдау...</b> (Выбрать данные...) командасын</div>
<div class="ln" style="text-align-last:left">орындаймыз <i>(&#8201;59-сурет&#8201;).</i></div>
</div>
</div>
<div class="a" style="left:1339px;top:140px;width:17px;height:555px;background:#f0f0f0"></div>
<div class="a" style="left:1339px;top:424px;width:17px;height:8px;background:#cdcdcd"></div>
<svg class="a" style="left:1343px;top:145px;" width="9" height="6" viewBox="0 0 9 6"><path d="M1,5 L4.5,1.5 L8,5" stroke="#8a8a8a" stroke-width="1.2" fill="none"/></svg>
<svg class="a" style="left:1343px;top:682px;" width="9" height="6" viewBox="0 0 9 6"><path d="M1,1 L4.5,4.5 L8,1" stroke="#8a8a8a" stroke-width="1.2" fill="none"/></svg>
<div class="a" style="left:1356px;top:140px;width:10px;height:555px;background:#cbced8"></div>
<svg class="a" style="left:41px;top:411px;" width="6" height="13" viewBox="0 0 6 13"><path d="M0.5,0.5 L5.5,6.5 L0.5,12.5 Z" fill="#7a7a7a"/></svg>
<svg class="a" style="left:1359px;top:411px;" width="7" height="13" viewBox="0 0 7 13"><path d="M6.5,0.5 L1,6.5 L6.5,12.5 Z" fill="#6a6a6a"/></svg>
<svg class="a" style="left:8px;top:153px;" width="20" height="20" viewBox="0 0 20 20"><circle cx="8" cy="8" r="6" fill="none" stroke="#1b1b1b" stroke-width="1.5" stroke-linejoin="round"/><path d="M12.3,12.3 L18,18" fill="none" stroke="#1b1b1b" stroke-width="1.5" stroke-linejoin="round" stroke-width="1.7"/></svg>
<svg class="a" style="left:9px;top:193px;" width="18" height="20" viewBox="0 0 18 20"><path d="M1.5,1 H10 L15.5,6.5 V19 H1.5 Z M10,1 V6.5 H15.5" fill="none" stroke="#1b1b1b" stroke-width="1.5" stroke-linejoin="round"/></svg>
<svg class="a" style="left:8px;top:233px;" width="21" height="19" viewBox="0 0 21 19"><path d="M1.5,0.5 H20.5 L19.5,18.5 H0.5 Z" fill="#1b1b1b"/><path d="M6,15 L10.5,3.5 L15,15 M7.8,11 H13.2 M4.5,15 H7.5 M13.5,15 H16.5" stroke="#fff" stroke-width="1.2" fill="none"/></svg>
<svg class="a" style="left:9px;top:273px;" width="20" height="18" viewBox="0 0 20 18"><rect x="0.5" y="1" width="3" height="3" fill="#1b1b1b"/><rect x="0.5" y="7.5" width="3" height="3" fill="#1b1b1b"/><rect x="0.5" y="14" width="3" height="3" fill="#1b1b1b"/><path d="M6,2.5 H19 M6,9 H19 M6,15.5 H19" stroke="#1b1b1b" stroke-width="1.5"/></svg>
<svg class="a" style="left:10px;top:313px;" width="16" height="19" viewBox="0 0 16 19"><path d="M1.5,1 H14.5 V17.5 L8,12.5 L1.5,17.5 Z" fill="none" stroke="#1b1b1b" stroke-width="1.5" stroke-linejoin="round"/></svg>
<svg class="a" style="left:8px;top:353px;" width="23" height="19" viewBox="0 0 23 19"><path d="M1.8,15.2 H22" stroke="#1b1b1b" stroke-width="1.5"/><path d="M2,10.6 L3.8,12.4 M3.8,10.6 L2,12.4" stroke="#1b1b1b" stroke-width="1"/><ellipse cx="9" cy="9.7" rx="3.6" ry="7.4" transform="rotate(-15 9 9.7)" fill="none" stroke="#1b1b1b" stroke-width="1.4"/><path d="M11.5,12.5 C12.5,9.5 13.5,9.3 14.5,11.5 C15.5,9.5 16.5,9.3 17.5,11.5 C18.5,9 19.8,8.8 21.5,11.8" stroke="#1b1b1b" stroke-width="1.4" fill="none"/></svg>
<svg class="a" style="left:7px;top:585px;" width="22" height="20" viewBox="0 0 22 20"><path d="M1.5,6.5 H6 L11.5,1.5 V18.5 L6,13.5 H1.5 Z" fill="none" stroke="#1b1b1b" stroke-width="1.5" stroke-linejoin="round" stroke-width="1.6"/><path d="M14.5,6.5 C16,8.5 16,11.5 14.5,13.5 M17,3.5 C20.5,7.5 20.5,12.5 17,16.5" fill="none" stroke="#1b1b1b" stroke-width="1.5" stroke-linejoin="round" stroke-width="1.6"/></svg>
<svg class="a" style="left:8px;top:625px;" width="20" height="20" viewBox="0 0 20 20"><circle cx="10" cy="10" r="8.8" fill="none" stroke="#1b1b1b" stroke-width="1.5" stroke-linejoin="round" stroke-width="1.4"/><rect x="9.2" y="8" width="1.6" height="7" fill="#1b1b1b"/><circle cx="10" cy="5.5" r="1" fill="#1b1b1b"/></svg>
<svg class="a" style="left:8px;top:665px;" width="20" height="20" viewBox="0 0 20 20"><circle cx="10" cy="10" r="8.8" fill="none" stroke="#4a7fe0" stroke-width="1.2"/><path d="M7.5,7.5 a2.5,2.5 0 1 1 3.5,2.3 c-0.8,0.4 -1,0.8 -1,1.8" fill="none" stroke="#4a7fe0" stroke-width="1.3"/><circle cx="10" cy="14.5" r="0.9" fill="#4a7fe0"/></svg>
<div class="a" style="left:0;top:695px;width:1366px;height:25px;background:#ffffff;border-top:1px solid #e6e7eb"></div>
<svg class="a" style="left:578px;top:701px;" width="11" height="14" viewBox="0 0 11 14"><path d="M1.5,0.5 V13.5 M9.5,1.5 L4,7 L9.5,12.5" fill="none" stroke="#2a2a2a" stroke-width="1.3" stroke-linejoin="round"/></svg>
<svg class="a" style="left:607px;top:701px;" width="8" height="14" viewBox="0 0 8 14"><path d="M6.5,1.5 L1.5,7 L6.5,12.5" fill="none" stroke="#2a2a2a" stroke-width="1.3" stroke-linejoin="round"/></svg>
<span class="t" id="t15" style="transform:scaleX(0.9136);left:641px;top:703.14px;font-size:12px;color:#222;font-weight:normal;font-family:'Liberation Sans';font-style:normal;">109</span>
<span class="t" id="t16" style="transform:scaleX(1.0274);left:672px;top:703.14px;font-size:12px;color:#9a9a9a;font-weight:normal;font-family:'Liberation Sans';font-style:normal;">/208</span>
<svg class="a" style="left:729px;top:701px;" width="8" height="14" viewBox="0 0 8 14"><path d="M1.5,1.5 L6.5,7 L1.5,12.5" fill="none" stroke="#2a2a2a" stroke-width="1.3" stroke-linejoin="round"/></svg>
<svg class="a" style="left:754px;top:701px;" width="11" height="14" viewBox="0 0 11 14"><path d="M1.5,1.5 L7,7 L1.5,12.5 M9.5,0.5 V13.5" fill="none" stroke="#2a2a2a" stroke-width="1.3" stroke-linejoin="round"/></svg>
<div class="a" style="left:850px;top:696px;width:23px;height:24px;background:#e4ebf7"></div>
<div class="a" style="left:893px;top:696px;width:24px;height:24px;background:#e4ebf7"></div>
<div class="a" style="left:883px;top:701px;width:1px;height:14px;background:#d5d6da"></div>
<div class="a" style="left:991px;top:701px;width:1px;height:14px;background:#d5d6da"></div>
<div class="a" style="left:1034px;top:701px;width:1px;height:14px;background:#d5d6da"></div>
<div class="a" style="left:1331px;top:701px;width:1px;height:14px;background:#d5d6da"></div>
<svg class="a" style="left:850px;top:697px;" width="22" height="22" viewBox="0 0 22 22"><path d="M4.2,3 V8.8 H17.8 V3 M4.2,18.5 V12.9 H17.8 V18.5 M13.5,12.9 V15.5 H17.8" fill="none" stroke="#2a2a2a" stroke-width="1.3" stroke-linejoin="round" stroke-width="1.4"/></svg>
<svg class="a" style="left:896px;top:697px;" width="20" height="22" viewBox="0 0 20 22"><path d="M4.3,3.2 H11.5 L15.6,7.3 V18.5 H4.3 Z M11.5,3.2 V7.3 H15.6" fill="none" stroke="#2a2a2a" stroke-width="1.3" stroke-linejoin="round" stroke-width="1.4"/></svg>
<svg class="a" style="left:927px;top:698px;" width="20" height="19" viewBox="0 0 20 19"><path d="M2.2,3.4 H10.2 M2.2,3.4 V16.5 H17.4 V6.5 L14.3,3.4 H10.5 M14.3,3.4 V6.5 H17.4" fill="none" stroke="#2a2a2a" stroke-width="1.3" stroke-linejoin="round" stroke-width="1.4"/><rect x="9.3" y="3.4" width="1.6" height="13" fill="#777"/></svg>
<svg class="a" style="left:959px;top:697px;" width="20" height="22" viewBox="0 0 20 22"><path d="M2.3,3 H6 L8.5,5.5 V11.5 H2.3 Z M2.3,18.5 V14 H8.5 V18.5 M11.5,18.5 V14 H17.8 V18.5" fill="none" stroke="#2a2a2a" stroke-width="1.3" stroke-linejoin="round" stroke-width="1.3"/></svg>
<svg class="a" style="left:1008px;top:699px;" width="14" height="18" viewBox="0 0 14 18"><path d="M1.5,1 H8.5 L12.5,5 V17 H1.5 Z M4.5,13.5 L9.5,8.5 M4.5,10.5 V13.5 H7.5 M6.5,8.5 H9.5 V11.5" fill="none" stroke="#2a2a2a" stroke-width="1.3" stroke-linejoin="round" stroke-width="1.1"/></svg>
<div class="a" style="left:1050px;top:707px;width:11px;height:1.5px;background:#333"></div>
<div class="a" style="left:1069px;top:707px;width:144px;height:2px;background:#e4e4e4"></div>
<div class="a" style="left:1069px;top:707px;width:71px;height:2px;background:#3a7bd5"></div>
<div class="a" style="left:1137px;top:702px;width:6px;height:12px;border-radius:3px;background:#3a7bd5"></div>
<svg class="a" style="left:1222px;top:702px;" width="12" height="12" viewBox="0 0 12 12"><path d="M6,0.5 V11.5 M0.5,6 H11.5" stroke="#333" stroke-width="1.3"/></svg>
<div class="a" style="left:1241px;top:698px;width:76px;height:20px;background:#fff;border:1px solid #b7b9be"></div>
<span class="t" id="t17" style="transform:scaleX(0.9152);left:1256.6px;top:705.14px;font-size:12px;color:#222;font-weight:normal;font-family:'Liberation Sans';font-style:normal;">100%</span>
<svg class="a" style="left:1297px;top:703px;" width="12" height="8" viewBox="0 0 12 8"><path d="M1,1 L6,6 L11,1" stroke="#333" stroke-width="1.3" fill="none"/></svg>
<svg class="a" style="left:1340px;top:699px;" width="16" height="17" viewBox="0 0 16 17"><path d="M1,16 L15,1 M1,9 V16 H8 M8,1 H15 V8" stroke="#3a6fc4" stroke-width="1.4" fill="none"/></svg>
<div class="a" style="left:0;top:720px;width:1366px;height:48px;background:#142a33"></div>
<div class="a" style="left:16px;top:733px;width:24px;height:21px;background:#0a5fb8;border-radius:2px"></div>
<div class="a" style="left:18px;top:735px;width:9px;height:17px;background:#fff;border-radius:1px"></div>
<div class="a" style="left:29px;top:735px;width:9px;height:9px;background:#6bd4ff"></div>
<div class="a" style="left:29px;top:745px;width:9px;height:7px;background:#1a8ef0"></div>
<div class="a" style="left:156px;top:733px;width:11px;height:11px;background:#35b6f2"></div>
<div class="a" style="left:168px;top:733px;width:11px;height:11px;background:#35b6f2"></div>
<div class="a" style="left:156px;top:745px;width:11px;height:11px;background:#1f9be6"></div>
<div class="a" style="left:168px;top:745px;width:11px;height:11px;background:#1f9be6"></div>
<div class="a" style="left:192px;top:728px;width:218px;height:32px;border-radius:16px;background:#2c3e46;border:1px solid #34474f"></div>
<svg class="a" style="left:203px;top:735px;" width="16" height="17" viewBox="0 0 16 17"><circle cx="9.5" cy="6.5" r="5" fill="none" stroke="#e6e6e6" stroke-width="1.6"/><path d="M6,10 L1.5,15" stroke="#e6e6e6" stroke-width="2" stroke-linecap="round"/></svg>
<span class="t" id="t18" style="transform:scaleX(1.0181);left:229.2px;top:736.33px;font-size:14px;color:#dcdcdc;font-weight:normal;font-family:'Liberation Sans';font-style:normal;">Поиск</span>
<svg class="a" style="left:353px;top:729px;" width="56" height="30" viewBox="0 0 56 30"><path d="M1,28 L5,24 H55 L51,28 Z" fill="#e8eef5"/>
<rect x="12" y="3" width="3" height="12" fill="#b9c2d4"/><path d="M12,3 L13.5,0 L15,3 Z" fill="#b9c2d4"/>
<rect x="13" y="15" width="16" height="9" fill="#f2d27a"/><path d="M12,15 L20,11 L29,15 Z" fill="#d84a3a"/>
<path d="M2,20 L9,13 L16,20 Z" fill="#e25a3a"/><rect x="4" y="20" width="10" height="4" fill="#f0c060"/><path d="M5,21 V24 M8,21 V24 M11,21 V24" stroke="#2a4a9a" stroke-width="1"/>
<circle cx="41" cy="12" r="6.5" fill="none" stroke="#c0c8d8" stroke-width="1.2"/><path d="M41,5.5 V18.5 M34.5,12 H47.5 M36.5,7.5 L45.5,16.5 M45.5,7.5 L36.5,16.5" stroke="#c0c8d8" stroke-width="0.6"/>
<rect x="35" y="17" width="13" height="7" fill="#e6ecf4"/>
<path d="M29,3 L23,25 H35 Z" fill="#2f9a4a"/><path d="M29,1 L30,3 L29,4 L28,3 Z" fill="#f5d020"/><circle cx="29" cy="2.5" r="1.6" fill="#f5d020"/>
<rect x="47" y="8" width="7" height="16" fill="#d8a850"/><circle cx="50.5" cy="7" r="3" fill="#6aa6a0"/><circle cx="50.5" cy="13" r="1.5" fill="#fff"/></svg>
<svg class="a" style="left:423px;top:732px;" width="24" height="24" viewBox="0 0 24 24"><path d="M12,1 a11,11 0 1 1 -8,18.5 L1,23 L2.5,17.5 A11,11 0 0 1 12,1 Z" fill="#7b6fe0"/><rect x="6" y="8" width="9" height="8" rx="1.5" fill="#fff"/><path d="M15,11 L19,8.5 V15.5 L15,13 Z" fill="#fff"/></svg>
<svg class="a" style="left:468px;top:732px;" width="24" height="24" viewBox="0 0 24 24"><circle cx="12.0" cy="12.0" r="12.0" fill="#fc3f1d"/><text x="12" y="18" text-anchor="middle" font-family="Liberation Sans" font-weight="bold" font-size="15" fill="#fff">Я</text></svg>
<svg class="a" style="left:512px;top:732px;" width="24" height="24" viewBox="0 0 24 24"><circle cx="12" cy="12" r="11" fill="none" stroke="#e0224e" stroke-width="1.5"/><ellipse cx="12.5" cy="12" rx="4.8" ry="8" fill="none" stroke="#e0224e" stroke-width="1.5"/></svg>
<svg class="a" style="left:556px;top:732px;" width="24" height="24" viewBox="0 0 24 24"><defs><linearGradient id="opg" x1="0" y1="0" x2="0" y2="1"><stop offset="0" stop-color="#ff1b2d"/><stop offset="1" stop-color="#c3001a"/></linearGradient></defs><ellipse cx="12" cy="12" rx="11.5" ry="11.8" fill="url(#opg)"/><ellipse cx="12.5" cy="12" rx="4.6" ry="8.2" fill="#142a33"/></svg>
<div class="a" style="left:600px;top:732px;width:24px;height:24px;border-radius:50%;background:conic-gradient(#ff3d6e,#ff8a2a,#ffd500,#5bd44a,#25c9e8,#4a6cf0,#b44af0,#ff3d6e)"></div>
<div class="a" style="left:606px;top:738px;width:12px;height:12px;border-radius:50%;background:radial-gradient(#ffffff 40%,rgba(255,255,255,0.3) 70%,rgba(255,255,255,0) 72%)"></div>
<svg class="a" style="left:646px;top:731px;" width="19" height="26" viewBox="0 0 19 26"><path d="M2,3 Q9.5,0 17,3 L18,14 Q18,22 9.5,25 Q1,22 1,14 Z" fill="#4a4f55" stroke="#c8ccd0" stroke-width="1"/><path d="M5,6 H14 M6,8 V19 M9.5,8 V21 M13,8 V19" stroke="#e8e8e8" stroke-width="1.6"/></svg>
<svg class="a" style="left:689px;top:731px;" width="21" height="25" viewBox="0 0 21 25"><path d="M1.5,24 V7 H6 L10.5,15 L15,7 H19.5 V24 H16 V13 L10.5,21 L5,13 V24 Z" fill="#e11d3a"/><path d="M4,6 L6,1.5 L10.5,4.5 L15,1.5 L17,6" stroke="#e11d3a" stroke-width="1.6" fill="none"/></svg>
<svg class="a" style="left:732px;top:732px;" width="24" height="24" viewBox="0 0 24 24"><path d="M12,0.5 L23.5,12 L12,23.5 L0.5,12 Z" fill="#e8b90f"/><path d="M7,7 L17,17 M17,7 L7,17" stroke="#3a3210" stroke-width="2"/><circle cx="12" cy="12" r="4" fill="none" stroke="#3a3210" stroke-width="1.5"/></svg>
<svg class="a" style="left:776px;top:732px;" width="24" height="24" viewBox="0 0 24 24"><circle cx="12.0" cy="12.0" r="12.0" fill="#36589e"/><path d="M6,5.5 L12,12.5 L18,5.5 M12,12.5 V19.5" stroke="#fff" stroke-width="2.6" fill="none"/></svg>
<svg class="a" style="left:820px;top:732px;" width="24" height="24" viewBox="0 0 24 24"><circle cx="12.0" cy="12.0" r="12.0" fill="#6b4fb0"/><path d="M5,10 Q5,7.5 8,7.5 H16 Q19,7.5 19,10 L20,15.5 Q20,17 18.5,17 L15.5,14.5 H8.5 L5.5,17 Q4,17 4,15.5 Z" fill="#f3c21a"/></svg>
<svg class="a" style="left:864px;top:732px;" width="24" height="24" viewBox="0 0 24 24"><circle cx="12.0" cy="12.0" r="12.0" fill="#f2f2f2"/><path d="M6,5 L12,12 L18,5 M12,12 V20" stroke="#ff3333" stroke-width="3" fill="none"/></svg>
<svg class="a" style="left:908px;top:731px;" width="24" height="24" viewBox="0 0 24 24"><rect x="8" y="2" width="15" height="20" fill="#a9c4f0"/><path d="M8,6 H23 M8,10 H23 M8,14 H23 M8,18 H23" stroke="#ffffff" stroke-width="1.2"/><rect x="0.5" y="5" width="14" height="14" rx="1" fill="#2b579a"/><text x="7.5" y="16" text-anchor="middle" font-family="Liberation Sans" font-weight="bold" font-size="11" fill="#fff">W</text></svg>
<svg class="a" style="left:951px;top:731px;" width="25" height="25" viewBox="0 0 25 25"><rect x="8" y="2" width="16" height="20" rx="1" fill="#f5b8a3"/><circle cx="17" cy="11" r="6" fill="#ed6c47"/><rect x="0.5" y="5" width="14" height="14" rx="1" fill="#c43e1c"/><text x="7.5" y="16" text-anchor="middle" font-family="Liberation Sans" font-weight="bold" font-size="11" fill="#fff">P</text></svg>
<svg class="a" style="left:996px;top:732px;" width="24" height="22" viewBox="0 0 24 22"><path d="M0.5,2 H9 L11,4 H23.5 V21 H0.5 Z" fill="#e8a51c"/><rect x="0.5" y="6" width="23" height="15" fill="#ffd45c"/><rect x="6" y="14" width="12" height="6" rx="1" fill="#1b7fd6"/></svg>
<div class="a" style="left:1032px;top:724px;width:40px;height:40px;border-radius:4px;background:#26363e"></div>
<svg class="a" style="left:1040px;top:732px;" width="24" height="24" viewBox="0 0 24 24"><rect x="0" y="0" width="24" height="24" rx="2" fill="#fff"/><path d="M13,0 Q21,5 19,10 H22 Q24,4 17,0 Z" fill="#d9141b"/><rect x="0" y="9" width="24" height="8" fill="#d9141b"/><path d="M10,24 Q18,22 22,15 H24 V24 Z" fill="#d9141b"/><text x="3" y="15.5" font-family="Liberation Sans" font-weight="bold" font-size="6.5" fill="#fff">PDF</text></svg>
<div class="a" style="left:872.0px;top:760px;width:8px;height:3px;border-radius:2px;background:#8a9499"></div>
<div class="a" style="left:916.0px;top:760px;width:8px;height:3px;border-radius:2px;background:#8a9499"></div>
<div class="a" style="left:959.0px;top:760px;width:8px;height:3px;border-radius:2px;background:#8a9499"></div>
<div class="a" style="left:1004.0px;top:760px;width:8px;height:3px;border-radius:2px;background:#8a9499"></div>
<div class="a" style="left:1044.0px;top:760px;width:16px;height:3px;border-radius:2px;background:#7fc4d8"></div>
<svg class="a" style="left:1092px;top:737px;" width="14" height="9" viewBox="0 0 14 9"><path d="M1,8 L7,1.5 L13,8" stroke="#fff" stroke-width="1.4" fill="none"/></svg>
<svg class="a" style="left:1114px;top:735px;" width="17" height="17" viewBox="0 0 17 17"><circle cx="8.5" cy="8.5" r="8" fill="#f5d020"/><circle cx="8.5" cy="8.5" r="5.5" fill="#3fae3a"/><path d="M8.5,5 V12 M5,8.5 H12" stroke="#f5d020" stroke-width="2"/></svg>
<span class="t" id="t19" style="transform:scaleX(0.9634);left:1146px;top:738.14px;font-size:12px;color:#ffffff;font-weight:normal;font-family:'Liberation Sans';font-style:normal;">ҚАЗ</span>
<svg class="a" style="left:1186px;top:735px;" width="17" height="14" viewBox="0 0 17 14"><path d="M1,5 Q8.5,-2 16,5 M3.5,7.5 Q8.5,2.5 13.5,7.5 M6,10 Q8.5,7.5 11,10" stroke="#fff" stroke-width="1.4" fill="none"/><circle cx="8.5" cy="12" r="1.2" fill="#fff"/></svg>
<svg class="a" style="left:1210px;top:735px;" width="18" height="16" viewBox="0 0 18 16"><path d="M1,5.5 H4 L8,1.5 V14.5 L4,10.5 H1 Z" stroke="#fff" stroke-width="1.2" fill="none"/><path d="M10.5,6 Q12,8 10.5,10 M12.8,4 Q15.5,8 12.8,12 M15,2 Q19,8 15,14" stroke="#fff" stroke-width="1.1" fill="none"/></svg>
<svg class="a" style="left:1234px;top:734px;" width="18" height="17" viewBox="0 0 18 17"><rect x="3" y="5.5" width="12" height="9" rx="1" stroke="#fff" stroke-width="1.3" fill="none"/><rect x="15" y="8" width="2" height="4" fill="#fff"/><path d="M4.5,1 V6 M8.5,1 V6" stroke="#fff" stroke-width="1.5"/><rect x="5" y="7.5" width="6" height="5" fill="#fff"/></svg>
<span class="t" id="t20" style="transform:scaleX(0.8862);left:1301.3px;top:729.14px;font-size:12px;color:#ffffff;font-weight:normal;font-family:'Liberation Sans';font-style:normal;">1:07</span>
<span class="t" id="t21" style="transform:scaleX(0.9224);left:1266.6px;top:745.64px;font-size:12px;color:#ffffff;font-weight:normal;font-family:'Liberation Sans';font-style:normal;">20.12.2024</span>
<svg class="a" style="left:1329.5px;top:736px;" width="16.5" height="16.5" viewBox="0 0 16.5 16.5"><circle cx="8.2" cy="8.2" r="8.2" fill="#a3d3dc"/><text x="8.2" y="12.2" text-anchor="middle" font-family="Liberation Sans" font-size="11" fill="#1a2a30">1</text></svg>
</body></html>
